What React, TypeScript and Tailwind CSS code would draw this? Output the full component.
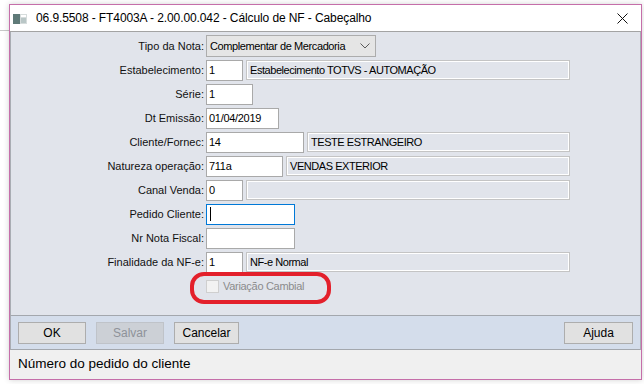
import React from 'react'

interface RowProps {
  label: string
  children: React.ReactNode
}

function Row({ label, children }: RowProps) {
  return (
    <div className="grid grid-cols-[193px_364px] gap-x-[2px] h-[24px] items-center">
      <span className="text-right text-[11px] text-[#111]">{label}</span>
      <div className="flex items-center gap-[3px]">{children}</div>
    </div>
  )
}

function Input({ w, value, focused }: { w: string; value?: string; focused?: boolean }) {
  return (
    <div
      className={`${w} h-[21px] shrink-0 bg-white border flex items-center pl-[2px] text-[11px] tracking-[-0.3px] text-black ${
        focused ? 'border-[#0078d7]' : 'border-[#a9a9a9]'
      }`}
    >
      {focused && <span className="w-px h-[14px] bg-black ml-px" />}
      {value}
    </div>
  )
}

function Desc({ value }: { value?: string }) {
  return (
    <div className="flex-1 h-[20px] border border-[#c4c4c4] shadow-[inset_1px_1px_0_#fff,inset_-1px_-1px_0_#fff] flex items-center pl-[3px] text-[11px] tracking-[-0.45px] text-black">
      {value}
    </div>
  )
}

function Btn({ w, label, disabled }: { w: string; label: string; disabled?: boolean }) {
  return (
    <div
      className={`${w} h-[22px] border flex items-center justify-center text-[12px] ${
        disabled ? 'bg-[#ccd0d6] border-[#bfc3c9] text-[#8e9299]' : 'bg-[#e1e1e1] border-[#adadad] text-black'
      }`}
    >
      {label}
    </div>
  )
}

export default function App() {
  return (
    <div className="relative w-[644px] h-[384px] overflow-hidden bg-white font-['Liberation_Sans',Arial,sans-serif]">
      {/* app behind */}
      <div className="absolute left-0 top-[30px] w-[9px] h-px bg-[#c8c8c8]" />

      {/* dialog window */}
      <div className="absolute left-[9px] top-[4px] w-[633px] h-[376px] border border-[#c56ea9] bg-[#f0f0f0] flex flex-col shadow-[0_0_6px_rgba(0,0,0,0.18)]">
        {/* title bar */}
        <div className="h-[26px] bg-white flex items-center shrink-0">
          <svg width="14" height="10" viewBox="0 0 14 10" className="ml-[3px] mt-[1px]">
            <rect x="0" y="0" width="14" height="10" fill="#d6dcdc" />
            <rect x="0" y="0" width="7" height="10" fill="#5f7a78" />
            <rect x="8" y="1" width="5" height="2" fill="#ffffff" />
            <rect x="8" y="4" width="5" height="5" fill="#b9c6c6" />
          </svg>
          <span className="ml-[9px] text-[12px] tracking-[-0.1px] text-black">
            06.9.5508 - FT4003A - 2.00.00.042 - Cálculo de NF - Cabeçalho
          </span>
          <svg width="11" height="11" viewBox="0 0 11 11" className="ml-auto mr-[13px]">
            <path d="M0.5 0.5L10.5 10.5M10.5 0.5L0.5 10.5" stroke="#111" strokeWidth="1" />
          </svg>
        </div>

        <div className="flex-1 flex flex-col border-t border-[#a3a3a3]">
          {/* form panel */}
          <div className="h-[283px] bg-[#e1e4eb] border-x border-[#a9adb3] pt-[2px] flex flex-col">
            <Row label="Tipo da Nota:">
              <div className="w-[170px] h-[22px] bg-[#e5e5e5] border border-[#acacac] flex items-center pl-[3px] text-[11px] tracking-[-0.4px] text-black">
                Complementar de Mercadoria
                <svg width="10" height="6" viewBox="0 0 10 6" className="ml-auto mr-[5px]">
                  <path d="M0.5 0.5L5 5L9.5 0.5" fill="none" stroke="#5a5a5a" strokeWidth="1" />
                </svg>
              </div>
            </Row>
            <Row label="Estabelecimento:">
              <Input w="w-[37px]" value="1" />
              <Desc value="Estabelecimento TOTVS - AUTOMAÇÃO" />
            </Row>
            <Row label="Série:">
              <Input w="w-[47px]" value="1" />
            </Row>
            <Row label="Dt Emissão:">
              <Input w="w-[73px]" value="01/04/2019" />
            </Row>
            <Row label="Cliente/Fornec:">
              <Input w="w-[98px]" value="14" />
              <Desc value="TESTE ESTRANGEIRO" />
            </Row>
            <Row label="Natureza operação:">
              <Input w="w-[77px]" value="711a" />
              <Desc value="VENDAS EXTERIOR" />
            </Row>
            <Row label="Canal Venda:">
              <Input w="w-[37px]" value="0" />
              <Desc />
            </Row>
            <Row label="Pedido Cliente:">
              <Input w="w-[89px]" focused />
            </Row>
            <Row label="Nr Nota Fiscal:">
              <Input w="w-[89px]" />
            </Row>
            <Row label="Finalidade da NF-e:">
              <Input w="w-[37px]" value="1" />
              <Desc value="NF-e Normal" />
            </Row>
            <Row label="">
              <div className="flex items-center gap-[4px]">
                <div className="w-[13px] h-[13px] border border-[#cfcfcf] bg-[#f2f2f2]" />
                <span className="text-[11px] tracking-[-0.3px] text-[#8b8b8b]">Variação Cambial</span>
              </div>
            </Row>
          </div>

          {/* button bar */}
          <div className="h-[35px] bg-[#d4ddeb] border-y border-[#a3a7ad] border-x-[#a9adb3] border-x flex items-center pl-[7px] pr-[7px] gap-[10px]">
            <Btn w="w-[68px]" label="OK" />
            <Btn w="w-[68px]" label="Salvar" disabled />
            <Btn w="w-[65px]" label="Cancelar" />
            <div className="ml-auto">
              <Btn w="w-[69px]" label="Ajuda" />
            </div>
          </div>

          {/* status bar */}
          <div className="flex-1 bg-[#f0f0f0] flex items-center pl-[8px] text-[13.5px] text-black">
            Número do pedido do cliente
          </div>
        </div>
      </div>

      {/* red highlight drawn over the screenshot */}
      <div className="absolute left-[190px] top-[272px] w-[141px] h-[32px] border-[4px] border-[#e3202b] rounded-[14px]" />
    </div>
  )
}
